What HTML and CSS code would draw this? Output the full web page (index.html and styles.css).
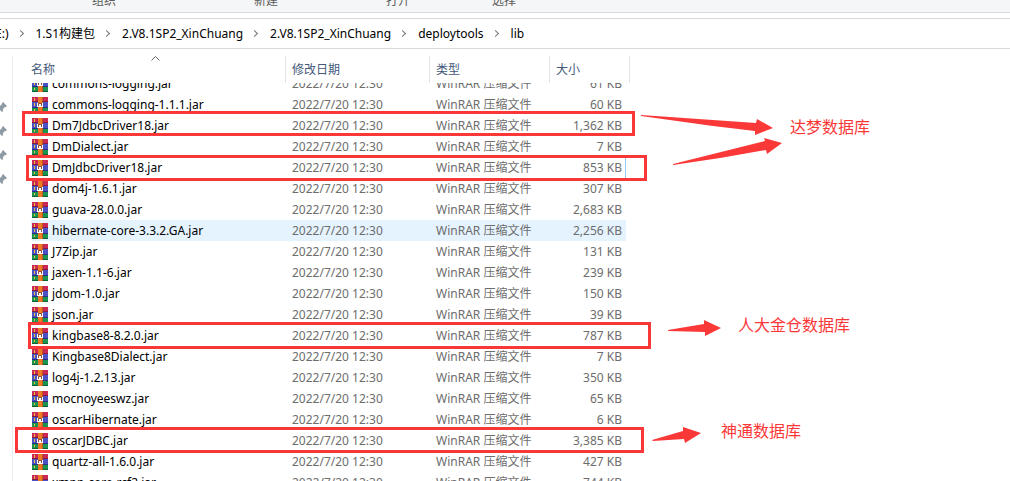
FILE: index.html
```html
<!DOCTYPE html>
<html lang="zh-CN">
<head>
<meta charset="utf-8">
<title>lib</title>
<link rel="stylesheet" href="styles.css">
</head>
<body>
<svg class="defs" aria-hidden="true">
<symbol id="rar" viewBox="0 0 16 16">
<path fill="#cc2856" d="M0 0h16v5H0z"/><path fill="#4d4fc4" d="M0 5h16v6H0z"/><path fill="#1b9450" d="M0 11h16v5H0z"/>
<path fill="#8a1a40" d="M0 4h16v1H0z"/><path fill="#2c2f86" d="M0 10h16v1H0z"/><path fill="#0d6236" d="M0 15h16v1H0z"/>
<path fill="#e8c33c" d="M2 1h1v3H2zM2 6h1v3H2zM2 12h1v2H2z"/>
<path fill="#ee7a26" d="M6 0h4v16H6z"/><path fill="#b9571d" d="M10 0h1v16h-1z"/>
<path fill="#8c5040" d="M6 6h4v3H6z"/>
<path fill="#fff" d="M5 6h1v3h1V7h2v2h1V6h1v4H5z"/>
</symbol>
<symbol id="pin" viewBox="0 0 10 10"><path fill="#8e9aa5" d="M5 0l4 4-1 1-1 0-2 2v2l-1 1-2-2-2 2-1-1 2-2-2-2 1-1h2l2-2V1z"/></symbol>
</svg>
<div class="explorer">
<div class="ribbon"><span>组织</span><span>新建</span><span>打开</span><span>选择</span></div>
<nav class="address">
<a href="#">E:)</a><i></i><a href="#">1.S1构建包</a><i></i><a href="#">2.V8.1SP2_XinChuang</a><i></i><a href="#">2.V8.1SP2_XinChuang</a><i></i><a href="#">deploytools</a><i></i><a href="#">lib</a>
</nav>
<main class="content">
<aside class="pins"><svg><use href="#pin"/></svg><svg><use href="#pin"/></svg><svg><use href="#pin"/></svg><svg><use href="#pin"/></svg></aside>
<div class="files">
<table>
<colgroup><col class="c-name"><col class="c-date"><col class="c-type"><col class="c-size"></colgroup>
<thead><tr><th>名称<svg class="sort" viewBox="0 0 9 5"><path d="M.5 4.5l4-4 4 4"/></svg></th><th>修改日期</th><th>类型</th><th>大小</th></tr></thead>
</table>
<div class="list">
<table>
<colgroup><col class="c-name"><col class="c-date"><col class="c-type"><col class="c-size"></colgroup>
<tbody id="rows"></tbody>
</table>
</div>
</div>
</main>
<div class="mark m1"></div><div class="mark m2"></div><div class="mark m3"></div><div class="mark m4"></div>
<svg class="arrows" width="1010" height="481" viewBox="0 0 1010 481" aria-hidden="true">
<path d="M641 115L756 123L757 119L773 128L755 135L755 131L713 126L641 116z"/>
<path d="M673 164L765 141L764 138L782 143L767 154L766 150L720 158L673 165z"/>
<path d="M668 330L704 324L704 320L721 328L705 336L705 332L668 331z"/>
<path d="M652 440L683 431L683 427L701 433L685 443L684 439L653 441z"/>
</svg>
<span class="note n1">达梦数据库</span><span class="note n2">人大金仓数据库</span><span class="note n3">神通数据库</span>
</div>
<script src="files.js"></script>
</body>
</html>
```

FILE: styles.css
```css
* { box-sizing: border-box; }
body { margin: 0; background: #fff; color: #000; font: 12px/21px "Noto Sans", "Noto Sans CJK SC", sans-serif; }
.defs { position: absolute; width: 0; height: 0; }
.explorer { position: relative; height: 100vh; overflow: hidden; display: flex; flex-direction: column; }
.ribbon { flex: none; height: 13px; overflow: hidden; background: #f5f6f7; border-bottom: 1px solid #d9dadb; color: #5a5a5a; display: flex; align-items: flex-end; padding-left: 92px; }
.ribbon span { line-height: 23px; flex: none; width: 137px; }
.ribbon span:first-child { width: 162px; }
.ribbon span:nth-child(2) { width: 132px; }
.ribbon span:nth-child(3) { width: 106px; }
.address { flex: none; margin-top: 5px; height: 31px; border: solid #d9d9d9; border-width: 1px 0; display: flex; align-items: center; white-space: nowrap; padding-bottom: 1px; }
.address a { color: #000; text-decoration: none; }
.address a:first-child { margin-left: -5px; }
.address i { width: 5px; height: 5px; border: solid #777; border-width: 1px 1px 0 0; transform: rotate(45deg); margin: 0 13px 0 9px; }
.content { flex: 1; min-height: 0; display: flex; padding-top: 7px; }
.pins { width: 13px; flex: none; border-right: 1px solid #ececec; display: flex; flex-direction: column; gap: 14px; padding-top: 46px; }
.pins svg { width: 10px; height: 10px; margin-left: -2px; flex: none; }
.files { flex: 1; display: flex; flex-direction: column; min-width: 0; }
table { table-layout: fixed; border-collapse: separate; border-spacing: 0; width: 617px; }
.c-name { width: 273px; } .c-date { width: 144px; } .c-type { width: 120px; } .c-size { width: 80px; }
th { position: relative; height: 27px; padding: 0 0 0 6px; text-align: left; font-weight: 400; color: #44587a; border-right: 1px solid #e3e3e3; }
th:first-child { padding-left: 18px; }
.sort { position: absolute; left: 138px; top: 0; width: 9px; height: 5px; fill: none; stroke: #666; }
.list { flex: 1; min-height: 0; overflow: hidden; }
.list table { margin-top: -10px; }
td { height: 21px; padding: 0 0 0 6px; color: #6d6d6d; white-space: nowrap; line-height: 20px; }
td:first-child { padding-left: 19px; color: #000; }
td:last-child { padding-right: 8px; text-align: right; }
td svg { width: 16px; height: 16px; vertical-align: middle; margin-right: 4px; }
.hover td { background: #e5f3ff; }
.hover td:first-child { background: linear-gradient(90deg, transparent 18px, #e5f3ff 18px); }
.hover td:last-child { background: linear-gradient(270deg, transparent 4px, #e5f3ff 4px); }
.focus td:last-child { background: linear-gradient(270deg, transparent 4px, #99c9ef 4px, #99c9ef 5px, transparent 5px); }
.mark { position: absolute; border: 3px solid #fb3838; }
.m1 { left: 22px; top: 111px; width: 613px; height: 25px; }
.m2 { left: 26px; top: 155px; width: 621px; height: 26px; }
.m3 { left: 28px; top: 322px; width: 623px; height: 27px; }
.m4 { left: 15px; top: 427px; width: 629px; height: 26px; }
.arrows { position: absolute; left: 0; top: 0; fill: #fb3838; }
.note { position: absolute; color: #fb3838; font-size: 16px; line-height: 20px; white-space: nowrap; }
.n1 { left: 790px; top: 117px; }
.n2 { left: 738px; top: 315px; }
.n3 { left: 721px; top: 421px; }
```

FILE: files.js
```js
const files = [
  ["commons-logging.jar", "61"],
  ["commons-logging-1.1.1.jar", "60"],
  ["Dm7JdbcDriver18.jar", "1,362"],
  ["DmDialect.jar", "7"],
  ["DmJdbcDriver18.jar", "853", "focus"],
  ["dom4j-1.6.1.jar", "307"],
  ["guava-28.0.0.jar", "2,683"],
  ["hibernate-core-3.3.2.GA.jar", "2,256", "hover"],
  ["J7Zip.jar", "131"],
  ["jaxen-1.1-6.jar", "239"],
  ["jdom-1.0.jar", "150"],
  ["json.jar", "39"],
  ["kingbase8-8.2.0.jar", "787"],
  ["Kingbase8Dialect.jar", "7"],
  ["log4j-1.2.13.jar", "350"],
  ["mocnoyeeswz.jar", "65"],
  ["oscarHibernate.jar", "6"],
  ["oscarJDBC.jar", "3,385"],
  ["quartz-all-1.6.0.jar", "427"],
  ["xmpp-core-rcf2.jar", "744"]
];
document.getElementById("rows").innerHTML = files.map(([name, size, state = ""]) =>
  `<tr class="${state}"><td><svg><use href="#rar"/></svg>${name}</td><td>2022/7/20 12:30</td><td>WinRAR 压缩文件</td><td>${size} KB</td></tr>`
).join("");
```
